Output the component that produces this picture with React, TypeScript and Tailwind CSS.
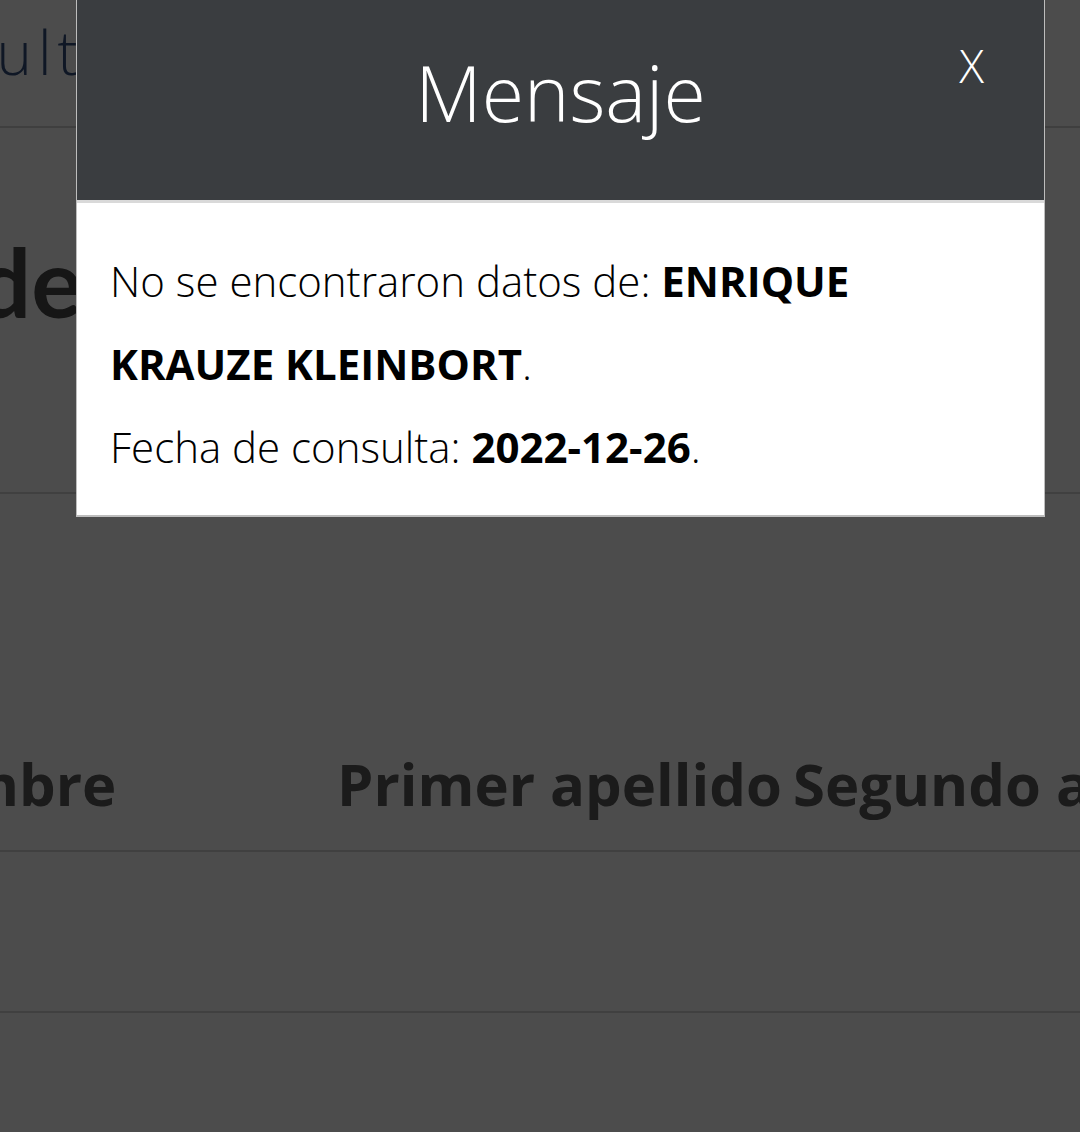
import React from "react";

export default function App() {
  return (
    <div className="relative h-[1132px] w-[1080px] overflow-hidden bg-white font-['Open_Sans',sans-serif]">
      {/* Background page */}
      <header className="flex h-[128px] items-start overflow-hidden border-b-2 border-[#d2d2d2] pt-[22px]">
        <span className="-ml-[118px] whitespace-nowrap text-[60px] font-light leading-none tracking-[6px] text-[#324d7c]">
          Resultados de la consulta
        </span>
      </header>
      <section className="h-[366px] overflow-hidden border-b-2 border-[#d6d6d6] pt-[105px]">
        <h1 className="-ml-[423px] whitespace-nowrap font-['Lato',sans-serif] text-[96px] font-bold leading-none text-[#4a4a4a]">
          Consulta de datos
        </h1>
      </section>
      <div className="overflow-hidden">
        <table className="-ml-[121px] mt-[222px] w-[1400px] table-fixed border-collapse text-left">
          <thead>
            <tr className="border-b-2 border-[#d6d6d6]">
              <th className="w-[458px] whitespace-nowrap pb-[37px] pl-0 pt-[39px] text-[58px] font-bold leading-none text-[#5a5a5a]">
                Nombre
              </th>
              <th className="w-[456px] whitespace-nowrap pb-[37px] pl-0 pt-[39px] text-[58px] font-bold leading-none text-[#5a5a5a]">
                Primer apellido
              </th>
              <th className="whitespace-nowrap pb-[37px] pl-0 pt-[39px] text-[58px] font-bold leading-none text-[#5a5a5a]">
                Segundo apellido
              </th>
            </tr>
          </thead>
          <tbody>
            <tr className="h-[161px] border-b-2 border-[#d6d6d6]">
              <td></td>
              <td></td>
              <td></td>
            </tr>
          </tbody>
        </table>
      </div>

      {/* Overlay */}
      <div className="absolute inset-0 bg-[rgba(0,0,0,0.7)]" />

      {/* Modal */}
      <div className="absolute left-[76px] top-0 w-[969px] border-x border-b-2 border-[#bdbdbd] bg-white">
        <div className="relative h-[200px] bg-[#3a3d40] pt-[54px] text-center">
          <h2 className="text-[77px] font-light leading-none text-white">Mensaje</h2>
          <button className="absolute right-[60px] top-[42px] text-[46px] font-light leading-none text-white">
            X
          </button>
        </div>
        <div className="h-[3px] bg-[#d9d9d9]" />
        <div className="pb-[27px] pl-[33px] pr-[40px] pt-[36px] text-[42px] font-light leading-[83px] text-black">
          <p>
            No se encontraron datos de: <strong className="font-bold">ENRIQUE KRAUZE KLEINBORT</strong>.
          </p>
          <p>
            Fecha de consulta: <strong className="font-bold">2022-12-26</strong>.
          </p>
        </div>
      </div>
    </div>
  );
}
